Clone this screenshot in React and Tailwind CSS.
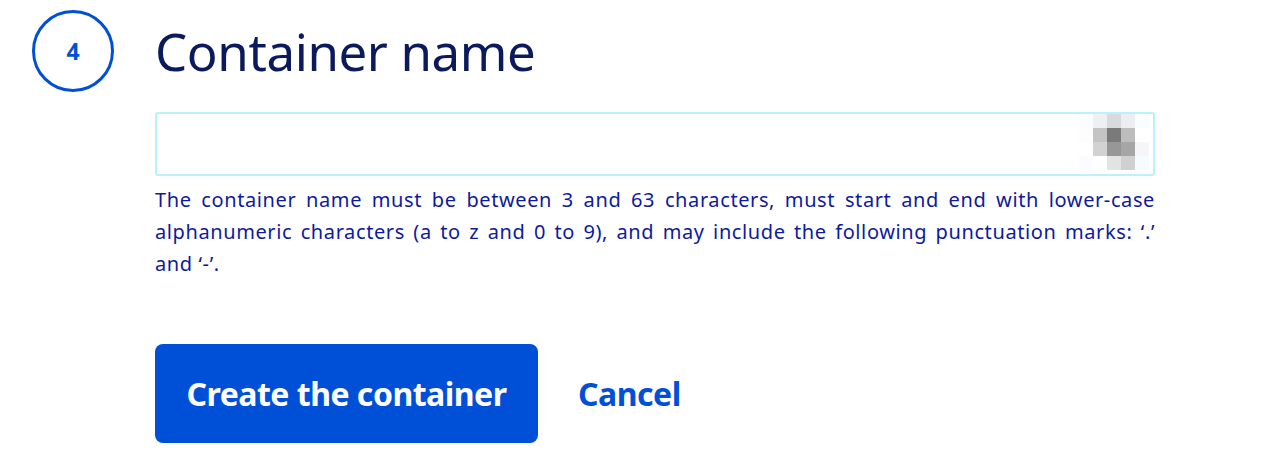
import React from "react";

const mosaic = [
  ["#fafcfd", "#eef0f1", "#d8dbdd", "#eceeef", "#fafdfe"],
  ["#fdfdfd", "#c4c4c4", "#7a7a7a", "#bdbdbd", "#ffffff"],
  ["#ffffff", "#d2d2d2", "#979797", "#a6a6a6", "#f6f6f8"],
  ["#fafcff", "#ffffff", "#e2e3e5", "#cfd0d2", "#f6fbff"],
];

export default function App() {
  return (
    <div
      className="w-[1262px] h-[470px] bg-white overflow-hidden"
      style={{ fontFamily: '"Noto Sans", "Open Sans", sans-serif' }}
    >
      <div className="flex pl-[32px] pt-[10px]">
        <div className="w-[82px] h-[82px] shrink-0 rounded-full border-[3.5px] border-[#0050d7] flex items-center justify-center text-[#0050d7] font-bold text-[23px]">
          4
        </div>
        <div className="ml-[41px] w-[1000px] flex flex-col">
          <h1 className="h-[82px] flex items-center text-[51px] text-[#0b1a5c] font-normal leading-none tracking-[-0.4px]">
            Container name
          </h1>
          <div className="mt-[20px] h-[64px] border-2 border-[#bdf0fd] rounded-[3px] flex items-center justify-end pr-[4px]">
            <div className="flex flex-col mt-[-4px]">
              {mosaic.map((row, i) => (
                <div key={i} className="flex">
                  {row.map((c, j) => (
                    <div key={j} className="w-[14px] h-[14px]" style={{ backgroundColor: c }} />
                  ))}
                </div>
              ))}
            </div>
          </div>
          <p className="mt-[8px] text-[20px] leading-[32px] tracking-[0.6px] text-[#0e1a9e] text-justify">
            The container name must be between 3 and 63 characters, must start and end with lower-case alphanumeric characters (a to z and 0 to 9), and may include the following punctuation marks: ‘.’ and{"\u00a0"}‘-’.
          </p>
          <div className="mt-[64px] flex items-center gap-[40px]">
            <button className="h-[99px] w-[383px] rounded-[8px] bg-[#0050d7] text-white font-bold text-[32px] tracking-[-0.5px]">
              Create the container
            </button>
            <span className="text-[#0050d7] font-bold text-[32px] tracking-[-0.5px]">Cancel</span>
          </div>
        </div>
      </div>
    </div>
  );
}
